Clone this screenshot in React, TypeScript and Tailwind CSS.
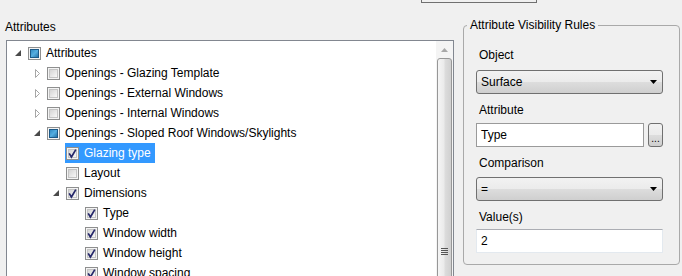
import React, { useId } from 'react';
import clsx from 'clsx';

// ─── Tree data ─────────────────────────────────────────────────────────────

type Check = 'none' | 'checked' | 'mixed';
type Expander = 'open' | 'closed' | 'leaf';

interface TreeNode {
  label: string;
  level: number;
  exp: Expander;
  check: Check;
  selected?: boolean;
}

const NODES: TreeNode[] = [
  { label: 'Attributes', level: 0, exp: 'open', check: 'mixed' },
  { label: 'Openings - Glazing Template', level: 1, exp: 'closed', check: 'none' },
  { label: 'Openings - External Windows', level: 1, exp: 'closed', check: 'none' },
  { label: 'Openings - Internal Windows', level: 1, exp: 'closed', check: 'none' },
  { label: 'Openings - Sloped Roof Windows/Skylights', level: 1, exp: 'open', check: 'mixed' },
  { label: 'Glazing type', level: 2, exp: 'leaf', check: 'checked', selected: true },
  { label: 'Layout', level: 2, exp: 'leaf', check: 'none' },
  { label: 'Dimensions', level: 2, exp: 'open', check: 'checked' },
  { label: 'Type', level: 3, exp: 'leaf', check: 'checked' },
  { label: 'Window width', level: 3, exp: 'leaf', check: 'checked' },
  { label: 'Window height', level: 3, exp: 'leaf', check: 'checked' },
  { label: 'Window spacing', level: 3, exp: 'leaf', check: 'checked' },
  { label: 'Window offset', level: 3, exp: 'leaf', check: 'checked' },
];

const INDENT = ['ml-[3px]', 'ml-[22px]', 'ml-[41px]', 'ml-[60px]'];

// ─── Small drawings ────────────────────────────────────────────────────────

function CheckBox({ state }: { state: Check }) {
  const id = useId();
  return (
    <svg width="13" height="13" viewBox="0 0 13 13" className="shrink-0">
      <defs>
        <linearGradient id={`${id}-bg`} x1="0" y1="0" x2="1" y2="1">
          <stop offset="0" stopColor="#d2d2d2" />
          <stop offset="1" stopColor="#fafafa" />
        </linearGradient>
        <linearGradient id={`${id}-blue`} x1="0" y1="0" x2="1" y2="1">
          <stop offset="0" stopColor="#2f86bf" />
          <stop offset="0.5" stopColor="#55aee0" />
          <stop offset="1" stopColor="#1f6aa0" />
        </linearGradient>
      </defs>
      <rect x="0.5" y="0.5" width="12" height="12" fill="#f4f4f4" stroke="#8e8f8f" />
      {state === 'mixed' ? (
        <rect x="2.5" y="2.5" width="8" height="8" fill={`url(#${id}-blue)`} stroke="#1c5a88" />
      ) : (
        <rect x="2.5" y="2.5" width="8" height="8" fill={`url(#${id}-bg)`} stroke="#c4c4c4" />
      )}
      {state === 'checked' && (
        <path d="M3.2 6.4 L5.4 10 L9.8 2.6" fill="none" stroke="#25276a" strokeWidth="1.7" />
      )}
    </svg>
  );
}

function OpenArrow() {
  return (
    <svg width="6" height="6" viewBox="0 0 6 6">
      <path d="M6 0 V6 H0 Z" fill="#4a4a4a" />
    </svg>
  );
}

function ClosedArrow() {
  return (
    <svg width="5" height="9" viewBox="0 0 5 9">
      <path d="M0.5 0.5 L4.5 4.5 L0.5 8.5 Z" fill="#ffffff" stroke="#a6a6a6" />
    </svg>
  );
}

function DropArrow() {
  return (
    <svg width="7" height="4" viewBox="0 0 7 4" className="shrink-0">
      <path d="M0 0 H7 L3.5 4 Z" fill="#000" />
    </svg>
  );
}

// ─── Tree ──────────────────────────────────────────────────────────────────

function TreeRow({ node }: { node: TreeNode }) {
  return (
    <div className="flex h-[20px] items-center">
      <div className={clsx(INDENT[node.level], 'flex h-[20px] w-[16px] shrink-0 items-center justify-center')}>
        {node.exp === 'open' && <OpenArrow />}
        {node.exp === 'closed' && <ClosedArrow />}
      </div>
      <div
        className={clsx(
          'ml-[1px] flex h-[20px] items-center gap-[5px] whitespace-nowrap pl-[1px] pr-[4px]',
          node.selected ? 'bg-[#3399ff] text-white' : 'text-black'
        )}
      >
        <CheckBox state={node.check} />
        <span>{node.label}</span>
      </div>
    </div>
  );
}

function ScrollBar() {
  return (
    <div className="flex w-[17px] shrink-0 flex-col bg-[#f4f4f4]">
      <div className="flex h-[17px] items-center justify-center">
        <svg width="7" height="4" viewBox="0 0 7 4">
          <path d="M0 4 H7 L3.5 0 Z" fill="#a8a8a8" />
        </svg>
      </div>
      <div className="mx-[1px] flex flex-1 flex-col items-center rounded-[3px] border border-[#979797] bg-[linear-gradient(to_right,#f5f5f5,#ebebeb_45%,#dcdcdc_55%,#d0d0d0)] pt-[189px]">
        <div className="flex flex-col gap-[1px]">
          <div className="h-[1px] w-[7px] bg-[#555]" />
          <div className="h-[1px] w-[7px] bg-[#555]" />
          <div className="h-[1px] w-[7px] bg-[#555]" />
          <div className="h-[1px] w-[7px] bg-[#555]" />
        </div>
      </div>
    </div>
  );
}

// ─── Form controls ─────────────────────────────────────────────────────────

function Combo({ value }: { value: string }) {
  return (
    <div className="flex h-[24px] w-[187px] items-center rounded-[3px] border border-[#707070] bg-[linear-gradient(to_bottom,#f2f2f2_0%,#ebebeb_50%,#dddddd_50%,#cfcfcf_100%)] pl-[4px] pr-[5px]">
      <span className="flex-1">{value}</span>
      <DropArrow />
    </div>
  );
}

function FieldLabel({ children, className }: { children: React.ReactNode; className?: string }) {
  return <div className={clsx('h-[16px] pl-[3px] leading-[16px]', className)}>{children}</div>;
}

// ─── App ───────────────────────────────────────────────────────────────────

export default function App() {
  return (
    <div className="h-[276px] w-[682px] overflow-hidden bg-[#f0f0f0] font-['Liberation_Sans',Arial,sans-serif] text-[12px] text-black">
      {/* bottom edge of a control above */}
      <div className="flex h-[3px]">
        <div className="ml-[421px] h-[3px] w-[116px] border-x border-b border-[#707070]" />
      </div>

      <div className="flex">
        {/* ─── Attribute tree ─── */}
        <div className="ml-[5px] flex w-[449px] shrink-0 flex-col">
          <div className="mt-[16px] h-[16px] leading-[16px]">Attributes</div>
          <div className="ml-[1px] mt-[5px] flex h-[300px] w-[448px] border border-[#828790] bg-white">
            <div className="flex-1 overflow-hidden pt-[2px]">
              {NODES.map((n) => (
                <TreeRow key={n.label + n.level} node={n} />
              ))}
            </div>
            <ScrollBar />
          </div>
        </div>

        {/* ─── Visibility rules ─── */}
        <fieldset className="ml-[9px] mt-[14px] h-[248px] w-[217px] shrink-0 rounded-[4px] border border-[#a9a9a9]">
          <legend className="ml-[3px] h-[16px] px-[3px] leading-[16px]">Attribute Visibility Rules</legend>
          <div className="pl-[12px]">
            <FieldLabel className="mt-[14px]">Object</FieldLabel>
            <div className="mt-[7px]">
              <Combo value="Surface" />
            </div>

            <FieldLabel className="mt-[8px]">Attribute</FieldLabel>
            <div className="mt-[5px] flex w-[187px] gap-[4px]">
              <div className="flex h-[24px] w-[168px] items-center border border-[#9a9a9a] bg-white pl-[4px]">Type</div>
              <div className="flex h-[24px] w-[15px] items-center justify-center rounded-[3px] border border-[#707070] bg-[linear-gradient(to_bottom,#f2f2f2_0%,#ebebeb_50%,#dddddd_50%,#cfcfcf_100%)] text-[10px] leading-none">
                <span className="mt-[8px]">...</span>
              </div>
            </div>

            <FieldLabel className="mt-[8px]">Comparison</FieldLabel>
            <div className="mt-[6px]">
              <Combo value="=" />
            </div>

            <FieldLabel className="mt-[8px]">Value(s)</FieldLabel>
            <div className="mt-[4px] flex h-[24px] w-[187px] items-center border border-[#e3e9ef] border-t-[#abadb3] bg-white pl-[4px]">
              2
            </div>
          </div>
        </fieldset>
      </div>
    </div>
  );
}
